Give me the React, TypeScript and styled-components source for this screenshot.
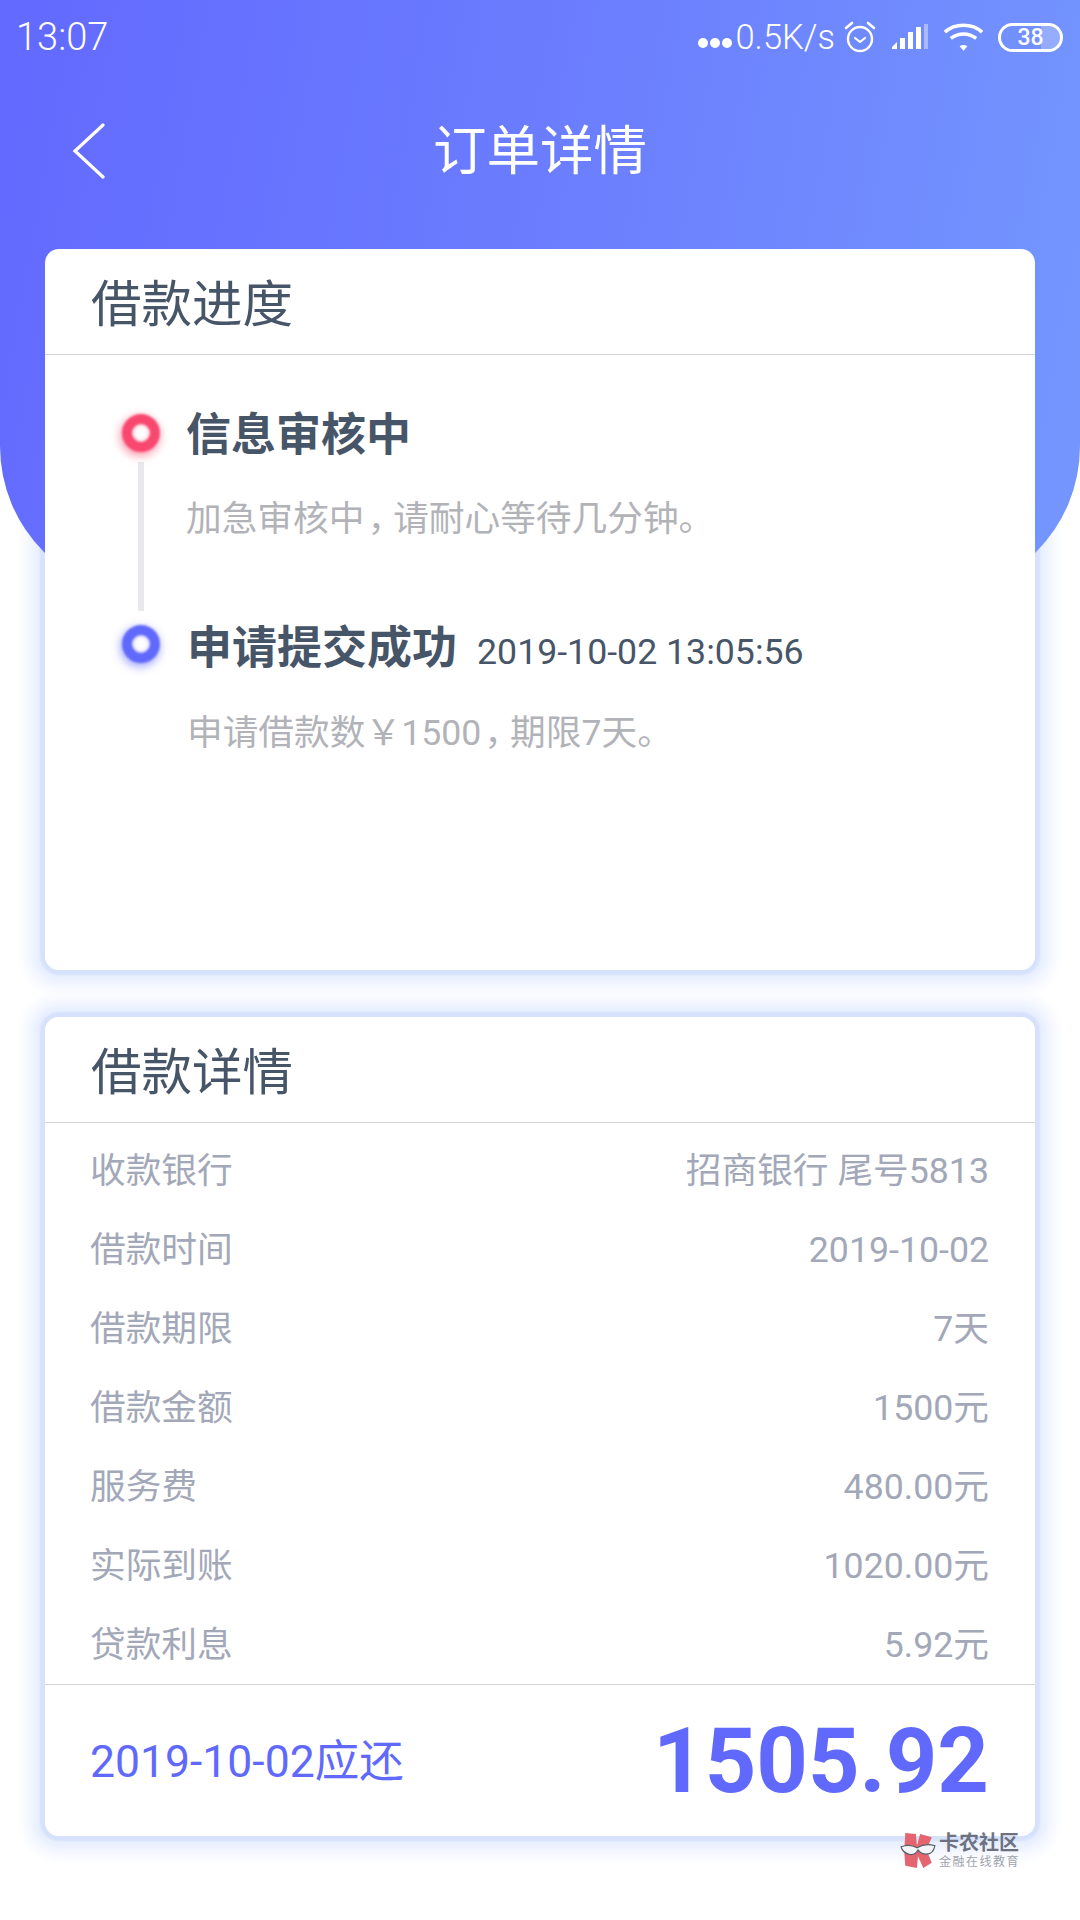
import { createGlobalStyle, styled } from 'styled-components';

const stack = `Roboto, 'Noto Sans CJK SC', sans-serif`;

const COMMA = '\uFF0C';
const YEN = '\uFFE5';

const details = [
    { label: '收款银行', value: '招商银行 尾号5813' },
    { label: '借款时间', value: '2019-10-02' },
    { label: '借款期限', value: '7天' },
    { label: '借款金额', value: '1500元' },
    { label: '服务费', value: '480.00元' },
    { label: '实际到账', value: '1020.00元' },
    { label: '贷款利息', value: '5.92元' },
];

const AlarmIcon = () => (
    <AlarmSvg viewBox="0 0 34 34" fill="none" stroke="#fff" strokeLinecap="round">
        <circle cx="17" cy="19" r="12" strokeWidth="2.4" />
        <path d="M12 18l5 4 5-4" strokeWidth="2.2" strokeLinejoin="round" />
        <path d="M3 8l6-5M31 8l-6-5" strokeWidth="2.6" />
    </AlarmSvg>
);

const SignalIcon = () => (
    <svg width="38" height="26" viewBox="0 0 38 26">
        <path d="M1 25v-2l5-5v7z" fill="#fff" />
        <rect x="9" y="14" width="5" height="11" fill="#fff" />
        <rect x="17" y="8" width="5" height="17" fill="#fff" />
        <rect x="25" y="3" width="5" height="22" fill="#fff" />
        <rect x="33" y="0" width="4" height="25" fill="#fff" fillOpacity="0.4" />
    </svg>
);

const WifiIcon = () => (
    <svg width="41" height="28" viewBox="0 0 42 28" fill="none" stroke="#fff" strokeWidth="3.6">
        <path d="M2 9C12-.5 30-.5 40 9" />
        <path d="M8 15.500c8-6 18-6 26 0" />
        <path d="M17 23.500l4 4.500 4-4.500c-2.400-1.600-5.600-1.600-8 0z" fill="#fff" stroke="none" />
    </svg>
);

const WatermarkLogo = () => (
    <svg width="36" height="36" viewBox="0 0 34 34">
        <path d="M5 0l10 1 1 11 3-11 11 3-5 12 5 12-8 5-5-11-1 11-11-2-1-13z" fill="#e4646f" />
        <path d="M1 13c5-2 10-2 15 1 5-3 11-4 17-2-1 5-4 8-8 8-4 0-6-1-8-4-2 4-5 5-9 4-3-1-6-3-7-7z" fill="#f4f5f8" stroke="#555c6c" strokeWidth="1.100" />
    </svg>
);

export default function App() {
    return (
        <Page>
            <GlobalStyle />
            <HeaderBackground />
            <StatusBar>
                <Clock>13:07</Clock>
                <StatusRight>
                    <Speed>
                        <Dots>
                            <Dot />
                            <Dot />
                            <Dot />
                        </Dots>
                        0.5K/s
                    </Speed>
                    <AlarmIcon />
                    <SignalIcon />
                    <WifiIcon />
                    <Battery>38</Battery>
                </StatusRight>
            </StatusBar>
            <NavBar>
                <BackIcon viewBox="0 0 34 56" fill="none" stroke="#fff" strokeWidth="3.200" strokeLinecap="round">
                    <path d="M31 2L3 28l28 26" />
                </BackIcon>
                <NavTitle>订单详情</NavTitle>
            </NavBar>
            <Cards>
                <ProgressCard>
                    <CardTitle>借款进度</CardTitle>
                    <Timeline>
                        <Step>
                            <Marker $color="#f9486f" $glow="rgba(249, 72, 111, 0.55)" />
                            <StepBody>
                                <StepTitle>信息审核中</StepTitle>
                                <StepNote>
                                    加急审核中<Comma>{COMMA}</Comma>请耐心等待几分钟。
                                </StepNote>
                            </StepBody>
                        </Step>
                        <Connector />
                        <Step>
                            <Marker $color="#6069fb" $glow="rgba(96, 105, 251, 0.55)" />
                            <LastStepBody>
                                <StepTitle>
                                    申请提交成功
                                    <StepTime>2019-10-02 13:05:56</StepTime>
                                </StepTitle>
                                <StepNote>
                                    申请借款数{YEN}1500<Comma>{COMMA}</Comma>期限7天。
                                </StepNote>
                            </LastStepBody>
                        </Step>
                    </Timeline>
                </ProgressCard>
                <DetailCard>
                    <CardTitle>借款详情</CardTitle>
                    <DetailList>
                        {details.map(row => (
                            <DetailRow key={row.label}>
                                <span>{row.label}</span>
                                <span>{row.value}</span>
                            </DetailRow>
                        ))}
                    </DetailList>
                    <Footer>
                        <DueLabel>2019-10-02应还</DueLabel>
                        <DueAmount>1505.92</DueAmount>
                    </Footer>
                </DetailCard>
            </Cards>
            <Watermark>
                <WatermarkLogo />
                <WatermarkText>
                    <WatermarkName>卡农社区</WatermarkName>
                    <WatermarkSlogan>金融在线教育</WatermarkSlogan>
                </WatermarkText>
            </Watermark>
        </Page>
    );
}

const GlobalStyle = createGlobalStyle`
    html, body {
        margin: 0;
        padding: 0;
        background: #ffffff;
    }
`;

const Page = styled.div`
    position: relative;
    isolation: isolate;
    width: 1080px;
    height: 1920px;
    overflow: hidden;
    font-family: ${stack};
    background: #ffffff;
`;

const HeaderBackground = styled.div`
    position: absolute;
    top: 0;
    left: 0;
    right: 0;
    height: 596px;
    z-index: -1;
    border-radius: 0 0 150px 150px;
    background: linear-gradient(100deg, #6269ff 0%, #6c80fe 55%, #7497fe 100%);
`;

const StatusBar = styled.div`
    display: flex;
    align-items: center;
    justify-content: space-between;
    height: 74px;
    padding: 0 17px 0 16px;
    color: #ffffff;
`;

const Clock = styled.span`
    font-size: 38px;
    font-weight: 300;
`;

const StatusRight = styled.div`
    display: flex;
    align-items: center;
    gap: 14px;
`;

const Speed = styled.span`
    display: flex;
    align-items: center;
    margin-right: -6px;
    font-size: 34.5px;
    font-weight: 300;
`;

const Dots = styled.span`
    display: flex;
    gap: 2px;
    margin: 12px 3px 0 0;
`;

const Dot = styled.i`
    width: 10px;
    height: 10px;
    border-radius: 50%;
    background: #ffffff;
`;

const AlarmSvg = styled.svg`
    width: 34px;
    height: 34px;
`;

const Battery = styled.div`
    display: flex;
    justify-content: center;
    align-items: center;
    box-sizing: border-box;
    width: 65px;
    height: 29px;
    border: 3px solid #ffffff;
    border-radius: 15px;
    background: linear-gradient(90deg, transparent 68%, rgba(255, 255, 255, 0.25) 68%);
    font-size: 23px;
    font-weight: 500;
    line-height: 23px;
`;

const NavBar = styled.div`
    display: flex;
    align-items: center;
    justify-content: center;
    position: relative;
    box-sizing: border-box;
    height: 100px;
    margin-top: 27px;
    padding-bottom: 10px;
`;

const BackIcon = styled.svg`
    position: absolute;
    left: 72px;
    top: 22px;
    width: 34px;
    height: 56px;
`;

const NavTitle = styled.h1`
    margin: 0;
    font-size: 53.5px;
    font-weight: 400;
    color: #ffffff;
`;

const Cards = styled.div`
    display: flex;
    flex-direction: column;
    gap: 47px;
    padding: 48px 45px 0;
`;

const Card = styled.section`
    position: relative;
    border-radius: 14px;
    background: #ffffff;

    &::before {
        content: '';
        position: absolute;
        inset: 0;
        z-index: -2;
        border-radius: 14px;
        box-shadow: 0 0 2px 5px #d6e2fc, 0 0 6px 12px #e8effe, 0 0 10px 22px #f5f8ff;
    }
`;

const ProgressCard = styled(Card)`
    height: 721px;
`;

const DetailCard = styled(Card)`
    height: 819px;
`;

const CardTitle = styled.h2`
    box-sizing: border-box;
    height: 106px;
    margin: 0;
    padding: 7px 0 0 46px;
    border-bottom: 1px solid #d3d4d8;
    font-size: 50.5px;
    font-weight: 400;
    line-height: 98px;
    color: #475568;
`;

const Timeline = styled.div`
    display: flex;
    flex-direction: column;
    padding: 49px 0 0 77px;
`;

const Step = styled.div`
    display: flex;
    align-items: flex-start;
    gap: 26px;
`;

const Marker = styled.span<{ $color: string; $glow: string }>`
    flex: none;
    box-sizing: border-box;
    width: 38px;
    height: 38px;
    margin-top: 10px;
    border: 10px solid ${p => p.$color};
    border-radius: 50%;
    background: #ffffff;
    filter: blur(0.8px);
    box-shadow: -1px 3px 9px 1px ${p => p.$glow}, inset 0 0 4px ${p => p.$glow};
`;

const StepBody = styled.div`
    display: flex;
    flex-direction: column;
    gap: 28px;
`;

const LastStepBody = styled(StepBody)`
    gap: 26px;
    margin: 2px 0 0 1px;
`;

const StepTitle = styled.div`
    display: flex;
    align-items: baseline;
    gap: 20px;
    margin-top: 3px;
    font-size: 45px;
    font-weight: 700;
    line-height: 58px;
    color: #475568;
`;

const StepTime = styled.span`
    font-size: 35.7px;
    font-weight: 400;
`;

const StepNote = styled.div`
    font-size: 35.7px;
    line-height: 52px;
    color: #b2b3b8;
`;

const Comma = styled.span`
    margin-left: 3px;
    letter-spacing: -10px;
`;

const Connector = styled.div`
    width: 6px;
    height: 149px;
    margin: -83px 0 4px 16px;
    background: #e9e9ec;
`;

const DetailList = styled.div`
    display: flex;
    flex-direction: column;
    padding: 8px 46px 0 45px;
`;

const DetailRow = styled.div`
    display: flex;
    justify-content: space-between;
    align-items: center;
    height: 79px;
    font-size: 35.7px;
    line-height: 44px;
    color: #a3a8b8;
`;

const Footer = styled.div`
    display: flex;
    justify-content: space-between;
    align-items: center;
    box-sizing: border-box;
    height: 150px;
    padding: 4px 46px 0 45px;
    border-top: 1px solid #d3d4d8;
`;

const DueLabel = styled.span`
    font-size: 44.5px;
    line-height: 56px;
    color: #6069fb;
`;

const DueAmount = styled.span`
    font-size: 90px;
    font-weight: 700;
    line-height: 100px;
    color: #6069fb;
`;

const Watermark = styled.div`
    position: absolute;
    left: 900px;
    top: 1832px;
    display: flex;
    align-items: center;
    gap: 3px;
`;

const WatermarkText = styled.div`
    display: flex;
    flex-direction: column;
`;

const WatermarkName = styled.span`
    font-size: 20px;
    font-weight: 700;
    line-height: 23px;
    color: #6e7280;
`;

const WatermarkSlogan = styled.span`
    font-size: 12px;
    line-height: 14px;
    letter-spacing: 1.500px;
    color: #a0a3ac;
`;
